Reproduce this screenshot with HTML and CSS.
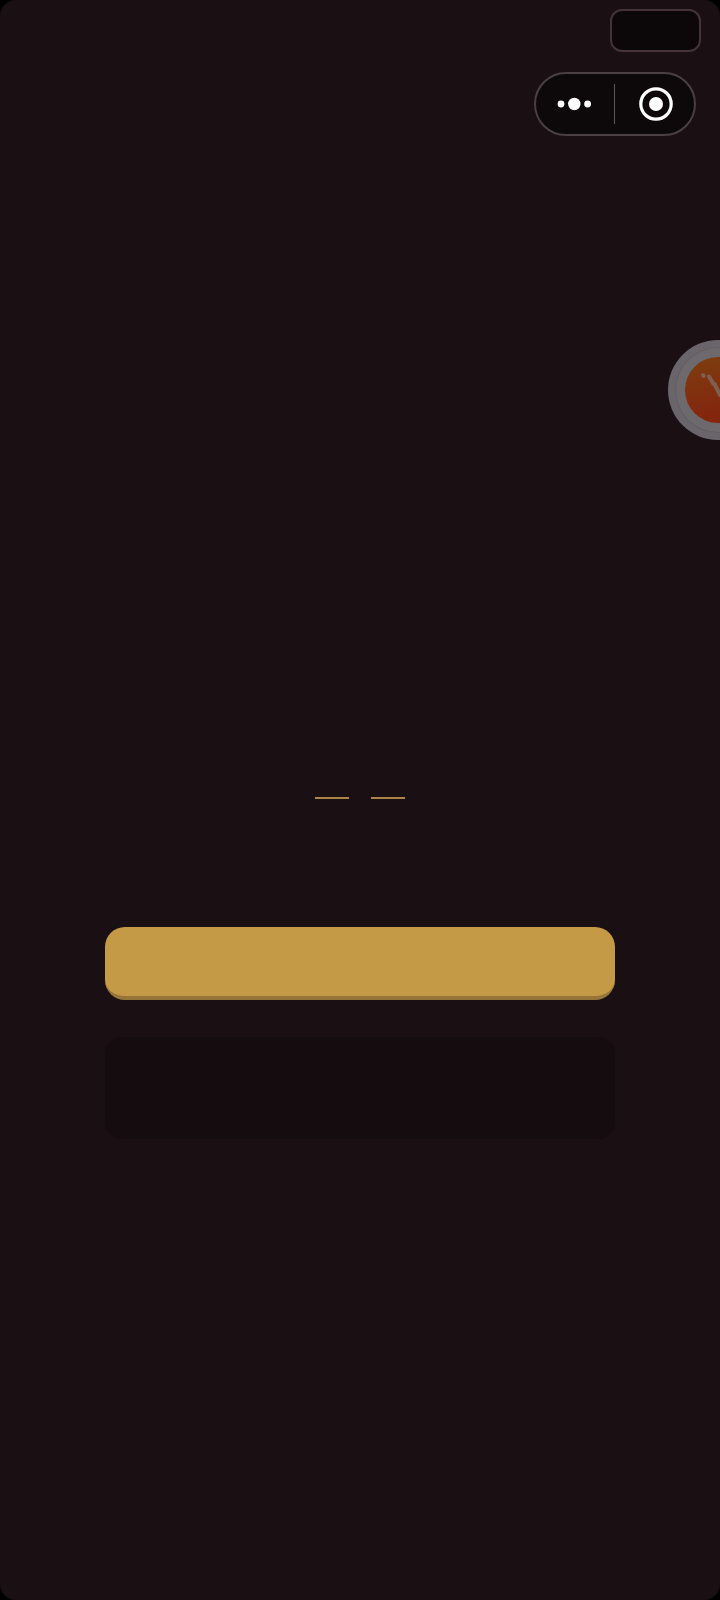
FILE: index.html
```html
<!DOCTYPE html>
<html lang="zh">
<head>
<meta charset="utf-8">
<title>Screen</title>
<link rel="stylesheet" href="styles.css">
</head>
<body>
<main class="screen">
  <header class="top">
    <div class="notch"></div>
    <div class="capsule">
      <div class="capsule-side capsule-more">
        <svg class="more" width="36" height="14" viewBox="0 0 36 14"><circle cx="4" cy="7" r="3.4"/><circle cx="17.3" cy="7" r="6.2"/><circle cx="30.6" cy="7" r="3.4"/></svg>
      </div>
      <div class="capsule-rule"></div>
      <div class="capsule-side capsule-target">
        <svg class="target" width="36" height="36" viewBox="0 0 36 36"><circle class="target-ring" cx="18" cy="18" r="15.2"/><circle cx="18" cy="18" r="7"/></svg>
      </div>
    </div>
  </header>
  <div class="float">
    <div class="float-band">
      <div class="float-inner">
        <svg class="float-marks" width="66" height="66" viewBox="0 0 66 66"><path d="M18 18 L18.6 18.8"/><path d="M24 19.5 L28.5 27"/><path d="M29.5 27 L35 38"/></svg>
      </div>
    </div>
  </div>
  <section class="content">
    <div class="dashes"><span class="dash"></span><span class="dash"></span></div>
    <div class="primary"></div>
    <div class="secondary"></div>
  </section>
</main>
</body>
</html>
```
FILE: styles.css
```css
html, body {
  margin: 0;
  padding: 0;
  background: #000;
}
.screen {
  position: relative;
  width: 720px;
  height: 1600px;
  overflow: hidden;
  background: #1a1014;
  border-radius: 16px;
  display: flex;
  flex-direction: column;
}
.top {
  display: flex;
  flex-direction: column;
  align-items: flex-end;
  padding: 9px 19px 0 0;
  gap: 20px;
}
.notch {
  width: 91px;
  height: 43px;
  box-sizing: border-box;
  background: #0c080a;
  border: 2px solid #46323a;
  border-radius: 12px;
}
.capsule {
  width: 162px;
  height: 64px;
  box-sizing: border-box;
  margin-right: 5px;
  display: flex;
  align-items: center;
  background: #0d090b;
  border: 2px solid #4a3f43;
  border-radius: 32px;
}
.capsule-side {
  display: flex;
  align-items: center;
  justify-content: center;
}
.capsule-more {
  width: 79px;
}
.capsule-target {
  width: 80px;
  padding-left: 3px;
  box-sizing: border-box;
}
.capsule-rule {
  width: 1px;
  height: 40px;
  background: #5f5659;
}
.more circle, .target circle {
  fill: #fff;
}
.target .target-ring {
  fill: none;
  stroke: #fff;
  stroke-width: 3.2;
}
.float {
  position: absolute;
  left: 668px;
  top: 340px;
  width: 100px;
  height: 100px;
  box-sizing: border-box;
  padding: 8px;
  border-radius: 50%;
  background: #69656a;
}
.float-band {
  width: 84px;
  height: 84px;
  box-sizing: border-box;
  padding: 9px;
  border-radius: 50%;
  background: #6d696c;
  box-shadow: 0 0 0 1px #635f62;
}
.float-inner {
  width: 66px;
  height: 66px;
  border-radius: 50%;
  background: linear-gradient(165deg, #7c3f0f, #84250e 80%);
  position: relative;
}
.float-marks {
  position: absolute;
  left: 0;
  top: 0;
}
.float-marks path {
  stroke: #7f5e54;
  stroke-width: 4;
  stroke-linecap: round;
  fill: none;
}
.content {
  display: flex;
  flex-direction: column;
  align-items: center;
  padding-top: 661px;
}
.dashes {
  display: flex;
  gap: 22.5px;
}
.dash {
  width: 34px;
  height: 1.5px;
  background: #a98546;
}
.primary {
  width: 510px;
  height: 73px;
  margin-top: 128px;
  box-sizing: border-box;
  background: #c49a46;
  border-bottom: 4px solid #96743a;
  border-radius: 20px;
}
.secondary {
  width: 510px;
  height: 102px;
  margin-top: 37px;
  background: #150c0f;
  border-radius: 16px;
}
```
